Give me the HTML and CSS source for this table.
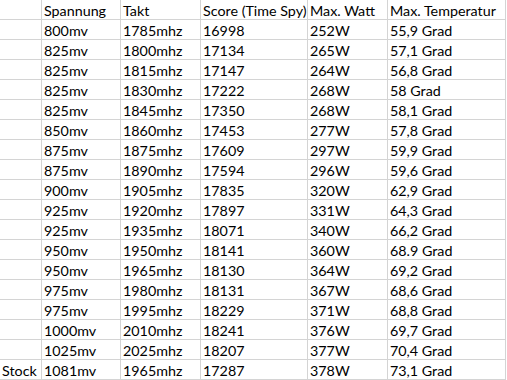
FILE: index.html
```html
<!DOCTYPE html>
<html lang="de">
<head>
    <meta charset="UTF-8">
    <title>Undervolting</title>
    <link rel="stylesheet" href="styles.css">
</head>
<body>
    <div class="sheet">
        <div class="cell"></div><div class="cell">Spannung</div><div class="cell">Takt</div><div class="cell">Score (Time Spy)</div><div class="cell">Max. Watt</div><div class="cell">Max. Temperatur</div>
        <div class="cell"></div><div class="cell">800mv</div><div class="cell">1785mhz</div><div class="cell">16998</div><div class="cell">252W</div><div class="cell">55,9 Grad</div>
        <div class="cell"></div><div class="cell">825mv</div><div class="cell">1800mhz</div><div class="cell">17134</div><div class="cell">265W</div><div class="cell">57,1 Grad</div>
        <div class="cell"></div><div class="cell">825mv</div><div class="cell">1815mhz</div><div class="cell">17147</div><div class="cell">264W</div><div class="cell">56,8 Grad</div>
        <div class="cell"></div><div class="cell">825mv</div><div class="cell">1830mhz</div><div class="cell">17222</div><div class="cell">268W</div><div class="cell">58 Grad</div>
        <div class="cell"></div><div class="cell">825mv</div><div class="cell">1845mhz</div><div class="cell">17350</div><div class="cell">268W</div><div class="cell">58,1 Grad</div>
        <div class="cell"></div><div class="cell">850mv</div><div class="cell">1860mhz</div><div class="cell">17453</div><div class="cell">277W</div><div class="cell">57,8 Grad</div>
        <div class="cell"></div><div class="cell">875mv</div><div class="cell">1875mhz</div><div class="cell">17609</div><div class="cell">297W</div><div class="cell">59,9 Grad</div>
        <div class="cell"></div><div class="cell">875mv</div><div class="cell">1890mhz</div><div class="cell">17594</div><div class="cell">296W</div><div class="cell">59,6 Grad</div>
        <div class="cell"></div><div class="cell">900mv</div><div class="cell">1905mhz</div><div class="cell">17835</div><div class="cell">320W</div><div class="cell">62,9 Grad</div>
        <div class="cell"></div><div class="cell">925mv</div><div class="cell">1920mhz</div><div class="cell">17897</div><div class="cell">331W</div><div class="cell">64,3 Grad</div>
        <div class="cell"></div><div class="cell">925mv</div><div class="cell">1935mhz</div><div class="cell">18071</div><div class="cell">340W</div><div class="cell">66,2 Grad</div>
        <div class="cell"></div><div class="cell">950mv</div><div class="cell">1950mhz</div><div class="cell">18141</div><div class="cell">360W</div><div class="cell">68.9 Grad</div>
        <div class="cell"></div><div class="cell">950mv</div><div class="cell">1965mhz</div><div class="cell">18130</div><div class="cell">364W</div><div class="cell">69,2 Grad</div>
        <div class="cell"></div><div class="cell">975mv</div><div class="cell">1980mhz</div><div class="cell">18131</div><div class="cell">367W</div><div class="cell">68,6 Grad</div>
        <div class="cell"></div><div class="cell">975mv</div><div class="cell">1995mhz</div><div class="cell">18229</div><div class="cell">371W</div><div class="cell">68,8 Grad</div>
        <div class="cell"></div><div class="cell">1000mv</div><div class="cell">2010mhz</div><div class="cell">18241</div><div class="cell">376W</div><div class="cell">69,7 Grad</div>
        <div class="cell"></div><div class="cell">1025mv</div><div class="cell">2025mhz</div><div class="cell">18207</div><div class="cell">377W</div><div class="cell">70,4 Grad</div>
        <div class="cell">Stock</div><div class="cell">1081mv</div><div class="cell">1965mhz</div><div class="cell">17287</div><div class="cell">378W</div><div class="cell">73,1 Grad</div>
    </div>
</body>
</html>
```

FILE: styles.css
```css
body {
    margin: 0;
    background-color: #fff;
    font-family: Lato, "Open Sans", sans-serif;
    font-size: 14.3px;
    color: #000;
}

.sheet {
    display: grid;
    grid-template-columns: 42px 79px 80px 107px 80px 118px;
    grid-auto-rows: 20px;
}

.cell {
    box-sizing: border-box;
    border-right: 1px solid #d4d4d4;
    border-bottom: 1px solid #d4d4d4;
    padding: 1px 0 0 2px;
    line-height: 19px;
    white-space: nowrap;
}
```
